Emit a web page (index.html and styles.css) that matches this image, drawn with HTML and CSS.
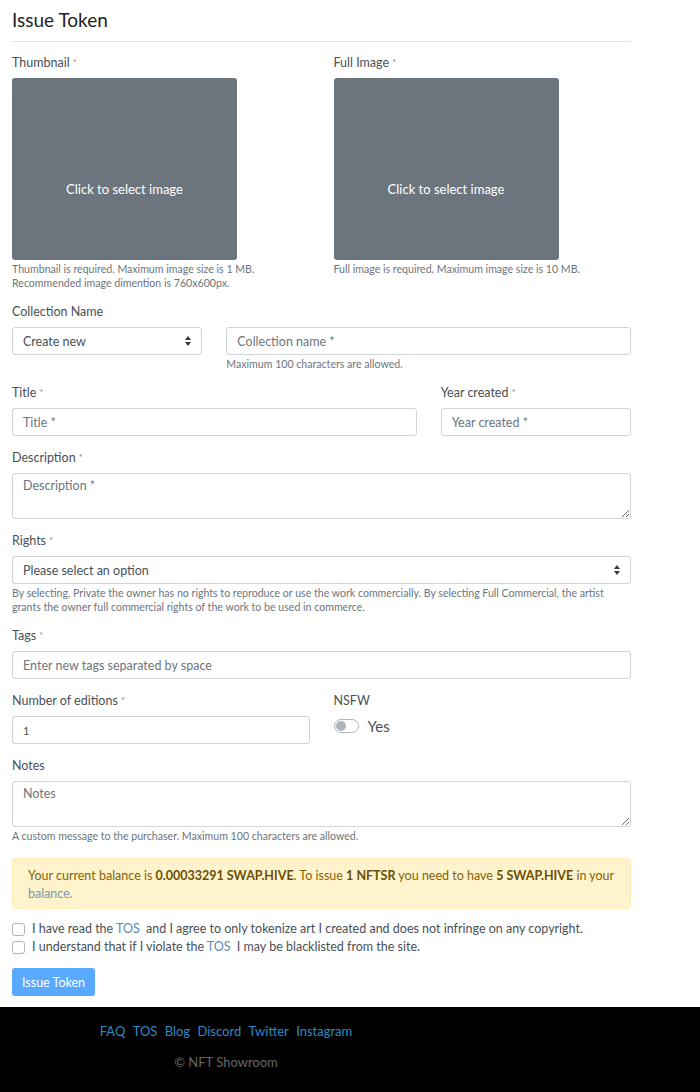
FILE: index.html
```html
<!DOCTYPE html>
<html lang="en">
<head>
  <meta charset="UTF-8">
  <title>Issue Token</title>
  <link rel="stylesheet" href="styles.css">
</head>
<body>

  <div class="page">
    <h1 class="page-title">Issue Token</h1>

    <div class="row">
      <div class="col col-6">
        <label class="label">Thumbnail <span class="req">*</span></label>
        <div class="image-pick">Click to select image</div>
        <small class="help">Thumbnail is required. Maximum image size is 1 MB.<br>Recommended image dimention is 760x600px.</small>
      </div>
      <div class="col col-6">
        <label class="label">Full Image <span class="req">*</span></label>
        <div class="image-pick">Click to select image</div>
        <small class="help">Full image is required. Maximum image size is 10 MB.</small>
      </div>
    </div>

    <div class="group">
      <label class="label">Collection Name</label>
      <div class="row">
        <div class="col col-4">
          <div class="select-wrap">
            <select class="control select"><option>Create new</option></select>
            <svg class="select-arrow" width="8" height="10" viewBox="0 0 8 10"><path d="M4 0L7 4H1z M4 10L1 6h6z" fill="#343a40"/></svg>
          </div>
        </div>
        <div class="col col-8">
          <input class="control" placeholder="Collection name *">
          <small class="help">Maximum 100 characters are allowed.</small>
        </div>
      </div>
    </div>

    <div class="row group">
      <div class="col col-8">
        <label class="label">Title <span class="req">*</span></label>
        <input class="control" placeholder="Title *">
      </div>
      <div class="col col-4">
        <label class="label">Year created <span class="req">*</span></label>
        <input class="control" placeholder="Year created *">
      </div>
    </div>

    <div class="group">
      <label class="label">Description <span class="req">*</span></label>
      <textarea class="control area" placeholder="Description *"></textarea>
    </div>

    <div class="group">
      <label class="label">Rights <span class="req">*</span></label>
      <div class="select-wrap">
        <select class="control select"><option>Please select an option</option></select>
        <svg class="select-arrow" width="8" height="10" viewBox="0 0 8 10"><path d="M4 0L7 4H1z M4 10L1 6h6z" fill="#343a40"/></svg>
      </div>
      <small class="help">By selecting, Private the owner has no rights to reproduce or use the work commercially. By selecting Full Commercial, the artist grants the owner full commercial rights of the work to be used in commerce.</small>
    </div>

    <div class="group">
      <label class="label">Tags <span class="req">*</span></label>
      <input class="control" placeholder="Enter new tags separated by space">
    </div>

    <div class="row group">
      <div class="col col-6">
        <label class="label">Number of editions <span class="req">*</span></label>
        <input class="control value" value="1">
      </div>
      <div class="col col-6">
        <label class="label">NSFW</label>
        <div class="switch">
          <span class="switch-track"><span class="switch-knob"></span></span>
          <span class="switch-text">Yes</span>
        </div>
      </div>
    </div>

    <div class="group">
      <label class="label">Notes</label>
      <textarea class="control area" placeholder="Notes"></textarea>
      <small class="help">A custom message to the purchaser. Maximum 100 characters are allowed.</small>
    </div>

    <div class="alert">
      Your current balance is <strong>0.00033291 SWAP.HIVE</strong>. To issue <strong>1 NFTSR</strong> you need to have <strong>5 SWAP.HIVE</strong> in your <a href="#" class="alert-link">balance.</a>
    </div>

    <div class="checks">
      <div class="check">
        <span class="check-box"></span>
        <span>I have read the <a href="#" class="tos">TOS</a> and I agree to only tokenize art I created and does not infringe on any copyright.</span>
      </div>
      <div class="check">
        <span class="check-box"></span>
        <span>I understand that if I violate the <a href="#" class="tos">TOS</a> I may be blacklisted from the site.</span>
      </div>
    </div>

    <button class="btn" disabled>Issue Token</button>
  </div>

  <footer class="footer">
    <div class="footer-inner">
      <nav class="footer-links">
        <a href="#">FAQ</a>
        <a href="#">TOS</a>
        <a href="#">Blog</a>
        <a href="#">Discord</a>
        <a href="#">Twitter</a>
        <a href="#">Instagram</a>
      </nav>
      <div class="copy">© NFT Showroom</div>
    </div>
  </footer>

</body>
</html>
```

FILE: styles.css
```css
body {
  font-family: Lato, "Open Sans", sans-serif;
  color: #495057;
  background: #fff;
  margin: 0;
  font-size: 12.5px;
}

.page {
  width: 619px;
  padding: 0 12px 11px;
}

.page-title {
  font-size: 19px;
  font-weight: 400;
  color: #222;
  margin: 0;
  padding: 8px 0 10px;
  border-bottom: 1px solid #e2e2e2;
  margin-bottom: 11px;
}

.row {
  display: flex;
  margin: 0 -12px;
}

.col {
  padding: 0 12px;
  box-sizing: border-box;
}

.col-4 { width: 33.333%; }
.col-6 { width: 50%; }
.col-8 { width: 66.667%; }

.group {
  margin-top: 12px;
}

.label {
  display: block;
  line-height: 19px;
  margin-bottom: 6px;
}

.req {
  font-size: 9px;
  vertical-align: top;
  color: #888;
}

.image-pick {
  width: 225px;
  height: 182px;
  box-sizing: border-box;
  padding-top: 40px;
  background: #6c757d;
  color: #fff;
  border-radius: 3px;
  display: flex;
  align-items: center;
  justify-content: center;
  font-size: 13px;
}

.help {
  display: block;
  font-size: 10.6px;
  line-height: 14px;
  color: #6c757d;
  margin-top: 2px;
}

.control {
  display: block;
  box-sizing: border-box;
  width: 100%;
  height: 28px;
  padding: 0 10px;
  font-family: inherit;
  font-size: 12.5px;
  color: #495057;
  background: #fff;
  border: 1px solid #ced4da;
  border-radius: 3px;
  margin: 0;
}

.control::placeholder {
  color: #6c757d;
}

.value {
  font-size: 11px;
}

.area {
  height: 46px;
  padding: 4px 10px;
  resize: vertical;
}

.select-wrap {
  position: relative;
}

.select {
  appearance: none;
  -webkit-appearance: none;
}

.select-arrow {
  position: absolute;
  right: 10px;
  top: 9px;
}

.switch {
  display: flex;
  align-items: center;
  height: 20px;
}

.switch-track {
  width: 23px;
  height: 12px;
  border: 1px solid #adb5bd;
  border-radius: 7px;
  position: relative;
  margin-right: 9px;
}

.switch-knob {
  position: absolute;
  left: 1px;
  top: 1px;
  width: 10px;
  height: 10px;
  border-radius: 50%;
  background: #adb5bd;
}

.switch-text {
  font-size: 15px;
}

.alert {
  margin-top: 15px;
  background: #fff3cd;
  border: 1px solid #ffeeba;
  border-radius: 3px;
  color: #856404;
  padding: 8px 15px 5px;
  line-height: 18px;
}

.alert strong {
  color: #6b4f03;
}

.alert-link {
  color: #7a9aa8;
  text-decoration: none;
}

.checks {
  margin-top: 11px;
}

.check {
  display: flex;
  align-items: center;
  line-height: 18px;
}

.check-box {
  width: 11px;
  height: 11px;
  border: 1px solid #adb5bd;
  border-radius: 3px;
  margin-right: 7px;
  flex: none;
}

.tos {
  color: #5b8db0;
  text-decoration: none;
  margin-right: 3px;
}

.btn {
  display: block;
  margin-top: 12px;
  font-family: inherit;
  font-size: 12.5px;
  color: #fff;
  background: #59a9ff;
  border: none;
  border-radius: 3px;
  padding: 0 10px;
  height: 28px;
}

.footer {
  background: #000;
  height: 85px;
}

.footer-inner {
  width: 452px;
  text-align: center;
  padding-top: 16px;
  font-size: 13px;
}

.footer-links a {
  color: #3288c4;
  text-decoration: none;
  margin: 0 2px;
}

.copy {
  color: #666;
  margin-top: 15px;
}
```
